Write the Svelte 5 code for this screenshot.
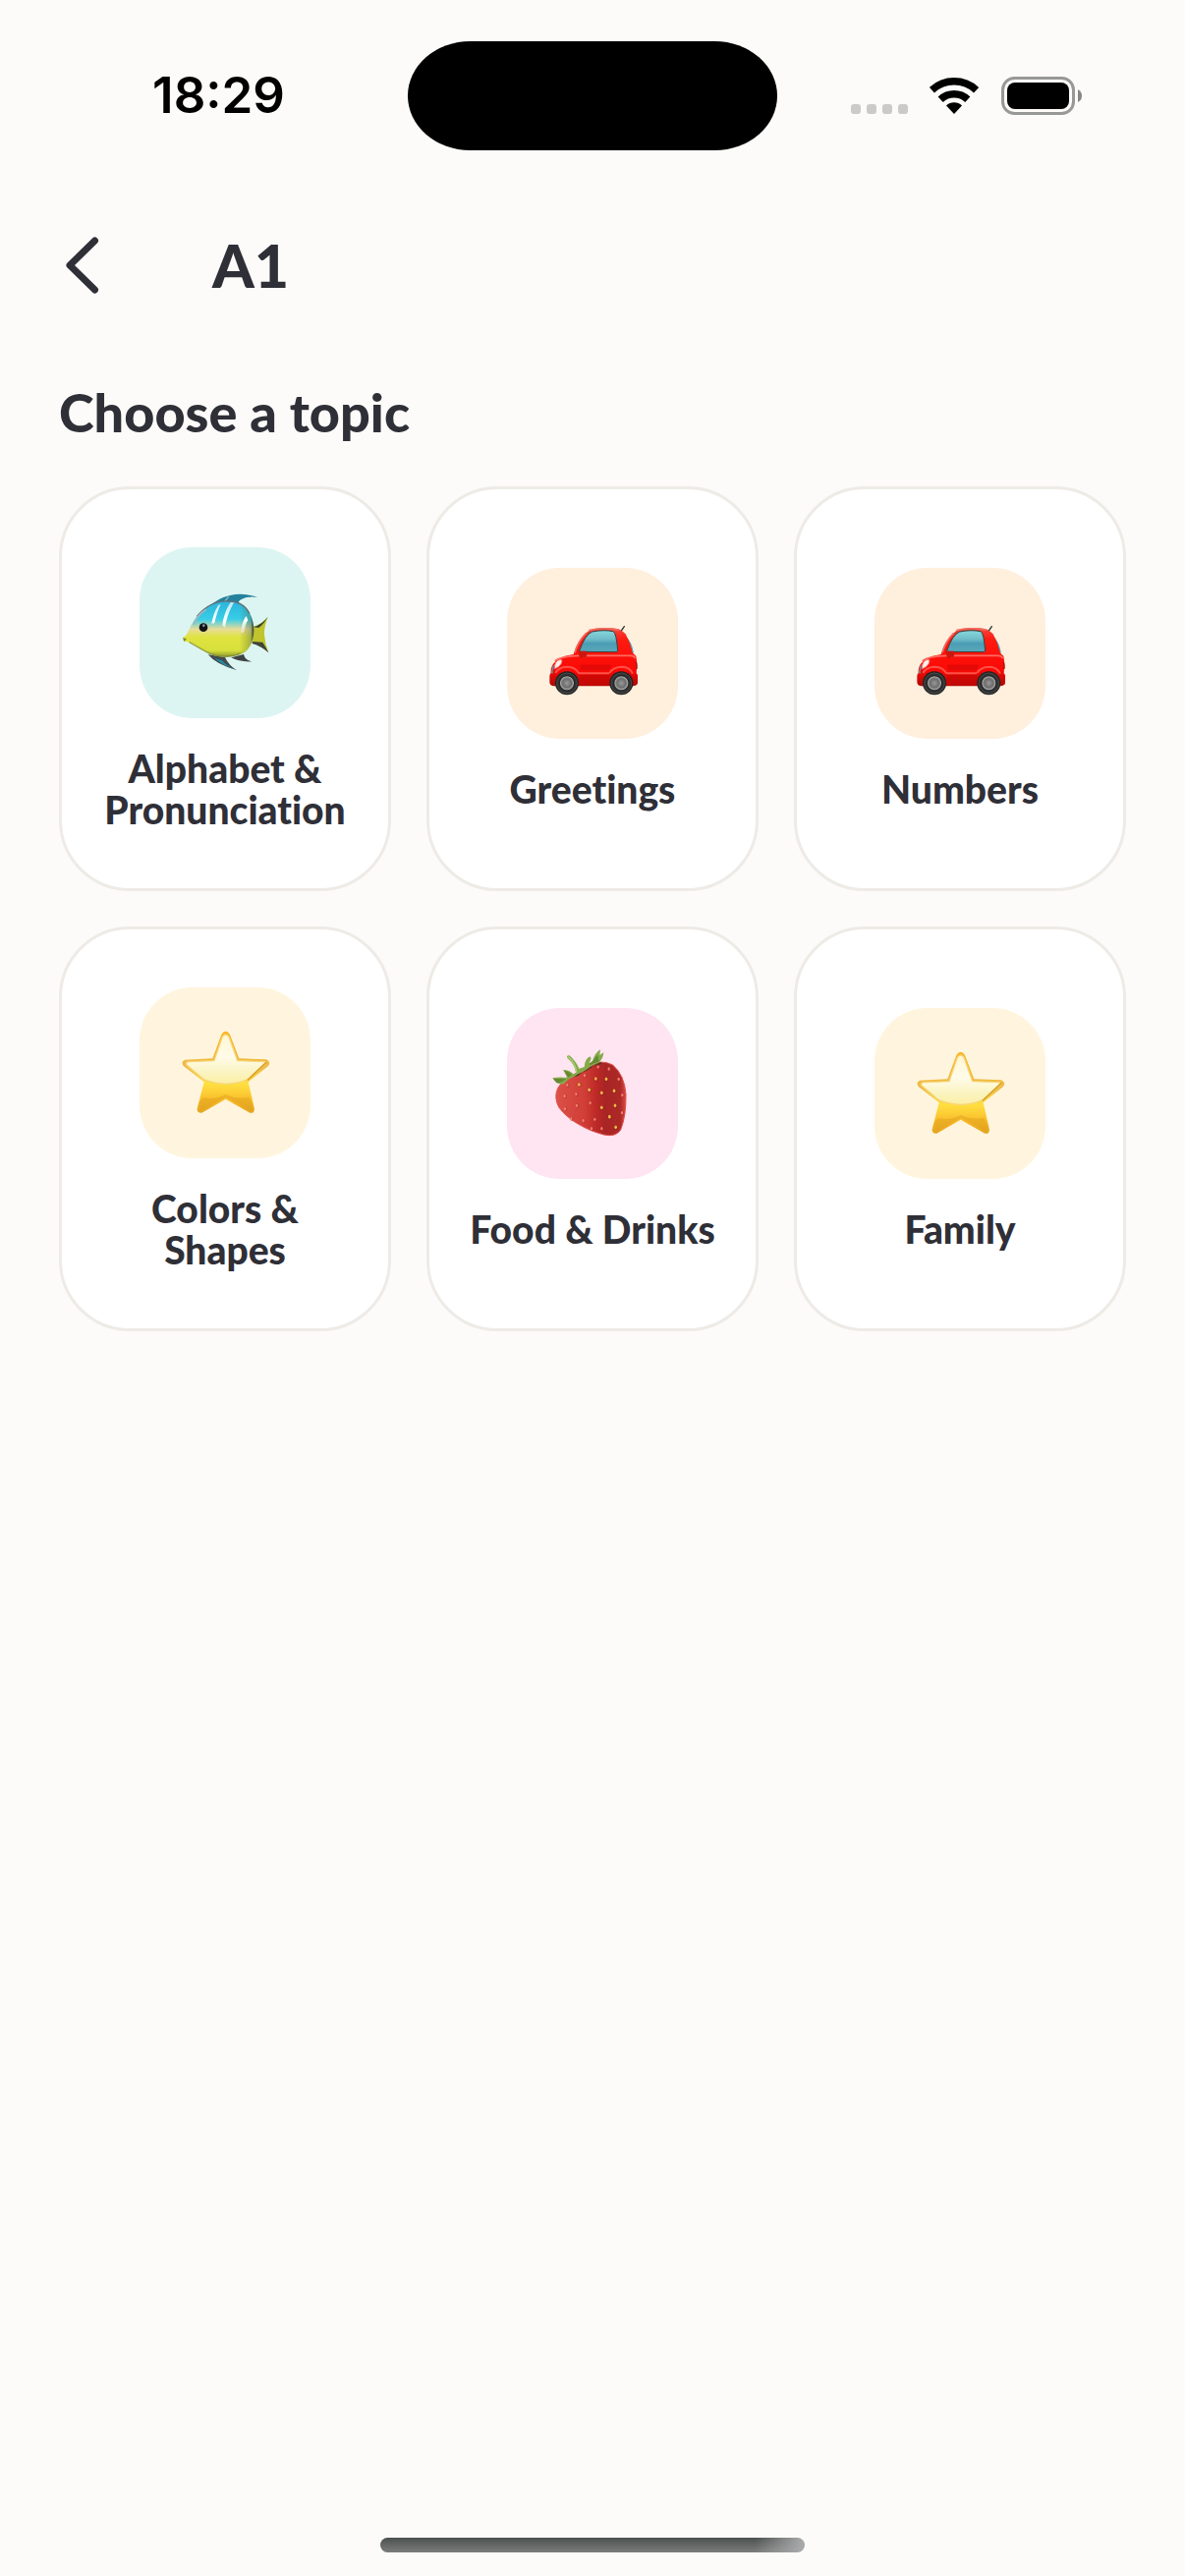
<script lang="ts">
  type Art = 'fish' | 'car' | 'star' | 'strawberry';

  interface Topic {
    name: string;
    art: Art;
  }

  const level = 'A1';

  const topics: Topic[] = [
    { name: 'Alphabet & Pronunciation', art: 'fish' },
    { name: 'Greetings', art: 'car' },
    { name: 'Numbers', art: 'car' },
    { name: 'Colors & Shapes', art: 'star' },
    { name: 'Food & Drinks', art: 'strawberry' },
    { name: 'Family', art: 'star' },
  ];

  // x, y of each seed on the strawberry
  const goldSeeds = [
    [148, 162], [179, 178], [199, 144], [231, 145], [217, 187],
    [255, 181], [217, 232], [258, 226], [241, 260], [260, 292],
  ];
  const pinkSeeds = [
    [112, 163], [104, 197], [139, 191], [141, 226], [105, 236], [182, 218],
    [124, 266], [161, 272], [196, 268], [186, 296], [217, 296], [165, 134],
    [206, 108], [239, 114], [269, 145], [280, 194], [279, 248],
  ];
</script>

{#snippet fish()}
  <svg class="art" viewBox="-54 -69 522 522" aria-hidden="true">
    <defs>
      <linearGradient id="fish-body" x1="0" y1="0" x2="0" y2="1">
        <stop offset="0" stop-color="#2bb4dc" />
        <stop offset="0.32" stop-color="#38cde6" />
        <stop offset="0.5" stop-color="#e8dc9a" />
        <stop offset="0.64" stop-color="#dfe340" />
        <stop offset="0.88" stop-color="#d8e03c" />
        <stop offset="1" stop-color="#8a962c" />
      </linearGradient>
      <linearGradient id="fish-edge" x1="0" y1="0" x2="1" y2="0">
        <stop offset="0.7" stop-color="#4a6038" stop-opacity="0" />
        <stop offset="0.93" stop-color="#4a6038" stop-opacity="0.35" />
        <stop offset="1" stop-color="#222a2c" />
      </linearGradient>
      <linearGradient id="fish-stripe" x1="0" y1="0" x2="0" y2="1">
        <stop offset="0" stop-color="#fff" stop-opacity="0.65" />
        <stop offset="0.6" stop-color="#fff" />
        <stop offset="1" stop-color="#fff" stop-opacity="0.3" />
      </linearGradient>
    </defs>
    <path d="M160 110C185 88 220 73 255 74C277 75 295 79 307 84C285 80 268 83 256 91C248 95 248 100 248 105L205 100Z" fill="#24829d" />
    <path d="M205 98L218 82" stroke="#9bb2bd" stroke-width="4" />
    <path d="M292 174Q321 165 338 143Q326 174 327 197Q329 227 340 253Q321 231 291 225Z" fill="#c1c42c" />
    <path d="M293 175Q321 166 338 143Q326 165 310 177L304 176ZM290 219L322 221Q331 235 340 253Q317 233 290 225Z" fill="#3f4637" />
    <path d="M155 259Q181 290 244 307Q219 293 207 267Z" fill="#434b4b" />
    <path d="M174 269Q198 290 231 302Q209 290 198 277Z" fill="#2489a4" />
    <path d="M226 268Q250 282 289 280Q268 276 264 258Z" fill="#3f4444" />
    <path d="M77 208L88 200C103 174 114 139 151 114C190 88 251 89 275 122C301 153 302 214 276 244C251 269 193 275 150 252C128 241 105 223 90 219L82 220L86 212Z" fill="url(#fish-body)" />
    <path d="M151 114C190 88 251 89 275 122C301 153 302 214 276 244C251 269 193 275 150 252Z" fill="url(#fish-edge)" />
    <path d="M185 109L194 105C186 122 179 145 175 163L166 164C169 147 175 126 185 111ZM225 98L236 98C222 118 212 146 207 176L199 170C201 146 210 119 225 98ZM272 141L277 154C267 169 269 181 263 193L255 192C257 172 263 150 272 141Z" fill="url(#fish-stripe)" />
    <path d="M121 142Q165 92 216 96Q263 96 282 134" fill="none" stroke="#62717a" stroke-width="4" />
    <path d="M112 167Q121 138 150 121" fill="none" stroke="#a2b7c0" stroke-width="5" />
    <path d="M78 208L90 211L82 219Z" fill="#7c872a" />
    <path d="M98 221Q134 242 161 256Q213 274 254 255" fill="none" stroke="#778332" stroke-width="4" opacity="0.65" />
    <circle cx="141" cy="176" r="13" fill="#121416" />
    <circle cx="142" cy="170" r="4" fill="#8794a2" />
  </svg>
{/snippet}

{#snippet car()}
  <svg class="art" viewBox="-72 -111 522 522" aria-hidden="true">
    <defs>
      <linearGradient id="car-body" x1="0" y1="0" x2="0" y2="1">
        <stop offset="0" stop-color="#ee493c" />
        <stop offset="0.2" stop-color="#ff1a10" />
        <stop offset="0.72" stop-color="#fb0a06" />
        <stop offset="1" stop-color="#aa0806" />
      </linearGradient>
      <linearGradient id="car-glass" x1="0" y1="0" x2="0" y2="1">
        <stop offset="0" stop-color="#85d8dc" />
        <stop offset="0.4" stop-color="#70bcc9" />
        <stop offset="0.6" stop-color="#4a9db5" />
        <stop offset="1" stop-color="#5ba8b8" />
      </linearGradient>
      <radialGradient id="car-hub">
        <stop offset="0" stop-color="#999" />
        <stop offset="0.6" stop-color="#6c6c6c" />
        <stop offset="0.85" stop-color="#a3a3a3" />
        <stop offset="1" stop-color="#383838" />
      </radialGradient>
    </defs>
    <path d="M275 84L286 68" stroke="#30383d" stroke-width="4" stroke-linecap="round" />
    <path d="M132 151Q138 119 165 93L174 88L145 148ZM289 96Q310 116 315 149L307 150Z" fill="#48b4c5" />
    <path d="M62 218Q60 194 69 182Q82 161 131 153Q145 117 170 88Q181 75 213 73H249Q274 73 290 91Q305 118 312 149L322 158L325 181L323 211L327 216V241Q326 249 312 250H70Q58 248 58 238V220Q58 211 64 211Z" fill="url(#car-body)" />
    <path d="M148 145Q166 92 188 84Q224 77 252 83Q262 87 266 143L261 146Z" fill="url(#car-glass)" stroke="#37413f" stroke-width="3" />
    <path d="M135 148Q146 111 170 88M178 80Q222 69 270 79" fill="none" stroke="#f56a5e" stroke-width="5" />
    <path d="M74 173Q93 158 150 157H302Q317 156 319 165" fill="none" stroke="#ff6b61" stroke-width="5" />
    <path d="M76 210Q86 191 112 191Q138 192 148 212M241 210Q253 191 279 191Q303 192 312 212M148 211H240" fill="none" stroke="#ff5147" stroke-width="6" />
    <path d="M150 185H246L239 202H154Z" fill="#d80906" opacity="0.7" />
    <path d="M149 216H240L242 248H145Z" fill="#c90806" opacity="0.7" />
    <path d="M147 143H168Q173 143 172 152L170 161H160L158 166H153L148 158Z" fill="#cb1710" />
    <path d="M70 187L65 208L68 211" fill="none" stroke="#559eaa" stroke-width="4" />
    <path d="M73 197Q73 172 91 169Q99 170 93 182Q87 192 76 196Z" fill="#fff0ed" stroke="#ff7a70" stroke-width="3" />
    <path d="M321 178Q325 182 324 198" stroke="#9a1515" stroke-width="4" fill="none" />
    {#each [111, 277] as cx}
      <circle {cx} cy="241" r="36" fill="#232323" />
      <circle {cx} cy="241" r="31" fill="#303332" stroke="#4a4a4a" stroke-width="3" />
      <circle {cx} cy="241" r="23" fill="url(#car-hub)" stroke="#1b1b1b" stroke-width="2" />
    {/each}
  </svg>
{/snippet}

{#snippet star(id: string)}
  <svg class="art" viewBox="-84 -75 522 522" aria-hidden="true">
    <defs>
      <linearGradient id="star-base-{id}" x1="0" y1="0" x2="0" y2="1">
        <stop offset="0" stop-color="#f9b520" />
        <stop offset="0.45" stop-color="#eebb49" />
        <stop offset="0.64" stop-color="#ffe040" />
        <stop offset="0.74" stop-color="#fdd038" />
        <stop offset="0.86" stop-color="#f9b826" />
        <stop offset="1" stop-color="#e2a41f" />
      </linearGradient>
      <linearGradient id="star-shine-{id}" x1="0" y1="0" x2="0" y2="1">
        <stop offset="0" stop-color="#fff6d4" />
        <stop offset="0.45" stop-color="#fffbe9" />
        <stop offset="0.8" stop-color="#faf3bd" />
        <stop offset="1" stop-color="#fcefa4" />
      </linearGradient>
    </defs>
    <path d="M166 69Q179 50 192 69L220 142L303 145Q319 153 309 165L248 214L267 296Q266 311 253 308L179 266L106 308Q91 309 92 295L113 214L50 165Q41 151 55 146L139 142Z" fill="url(#star-base-{id})" />
    <path d="M169 76Q179 62 189 76L215 149L298 152Q306 155 297 163L247 206Q181 234 112 206L61 163Q54 154 66 152L144 149Z" fill="url(#star-shine-{id})" stroke="#f6d578" stroke-width="4" />
    <path d="M302 155L247 207" stroke="#dda025" stroke-width="5" stroke-linecap="round" />
    <path d="M99 276L110 262Q150 268 179 252Q210 268 250 260L262 285L258 303L180 261L102 303Z" fill="#dda11f" opacity="0.5" />
  </svg>
{/snippet}

{#snippet strawberry()}
  <svg class="art" viewBox="-72 -72 522 522" aria-hidden="true">
    <defs>
      <linearGradient id="berry-skin" x1="0" y1="0" x2="1" y2="0">
        <stop offset="0" stop-color="#dc5149" />
        <stop offset="0.42" stop-color="#cf3d36" />
        <stop offset="0.58" stop-color="#bd2927" />
        <stop offset="0.7" stop-color="#a92525" />
        <stop offset="0.92" stop-color="#ad2927" />
        <stop offset="1" stop-color="#dc4b42" />
      </linearGradient>
    </defs>
    <path d="M112 143L178 103Q216 84 251 102Q287 133 291 192Q292 258 275 300Q260 323 224 315C175 303 113 270 87 232C68 197 78 165 112 143Z" fill="url(#berry-skin)" stroke="#dd5149" stroke-width="3" />
    <path d="M106 141L165 123L214 93L217 99L182 109L143 136Z" fill="#374026" />
    <path d="M67 141Q94 138 112 141L99 116Q119 117 131 130L139 127Q137 103 112 80Q109 72 119 73Q139 92 148 113L164 108Q165 84 181 76L185 82L179 97L188 94Q195 65 213 55L211 72L223 64Q222 84 207 95Q184 103 165 119Q143 129 133 137Q112 146 102 159Q81 166 67 141Z" fill="#85aa48" />
    <path d="M69 144Q91 143 108 145Q92 158 80 157ZM180 97Q194 88 204 71L209 92Q188 97 180 103ZM103 120Q116 120 126 132L115 140Z" fill="#557c2b" opacity="0.7" />
    <path d="M116 78Q136 98 140 123" fill="none" stroke="#a4ce75" stroke-width="5" stroke-linecap="round" />
    {#each pinkSeeds as [x, y]}
      <ellipse cx={x + 2} cy={y + 1} rx="5" ry="7" fill="#9e2925" opacity="0.4" />
      <ellipse cx={x} cy={y} rx="3.5" ry="5" fill="#f17c70" />
    {/each}
    {#each goldSeeds as [x, y]}
      <ellipse cx={x + 1} cy={y + 1} rx="6" ry="8" fill="#7f2218" opacity="0.4" />
      <ellipse cx={x} cy={y} rx="4" ry="5.5" fill="#efbb48" />
    {/each}
  </svg>
{/snippet}

<div class="screen">
  <div class="status-bar">
    <span class="time">18:29</span>
    <div class="island"></div>
    <div class="indicators">
      <svg width="58" height="39" viewBox="0 0 58 39" aria-hidden="true">
        {#each [0, 16, 32, 48] as x}
          <rect {x} y="28" width="10" height="10" rx="3" fill="#cacac8" />
        {/each}
      </svg>
      <svg width="51" height="39" viewBox="0 0 51 39" aria-hidden="true">
        <g fill="none" stroke="#000" stroke-width="7.5">
          <path d="M2.4 13.7A33.2 33.2 0 0 1 47.6 13.7" />
          <path d="M11.2 23.2A20.2 20.2 0 0 1 38.8 23.2" />
        </g>
        <path d="M25 38L17 29.4A11.7 11.7 0 0 1 33 29.4Z" />
      </svg>
      <svg width="82" height="39" viewBox="0 0 82 39" aria-hidden="true">
        <rect x="1.5" y="1.5" width="72" height="36" rx="12" fill="none" stroke="#989896" stroke-width="3" />
        <rect x="6" y="6" width="63" height="27" rx="8" />
        <path d="M78 13Q82 15 82 19.5Q82 24 78 26Z" fill="#868684" />
      </svg>
    </div>
  </div>

  <header class="nav">
    <button class="back" aria-label="Back">
      <svg width="48" height="72" viewBox="0 0 48 72" aria-hidden="true">
        <path d="M36.5 11L11 36L36.5 61" />
      </svg>
    </button>
    <h1>{level}</h1>
  </header>

  <main>
    <h2>Choose a topic</h2>
    <div class="topics">
      {#each topics as topic, i}
        <button class="card">
          <span class="tile {topic.art}">
            {#if topic.art === 'fish'}
              {@render fish()}
            {:else if topic.art === 'car'}
              {@render car()}
            {:else if topic.art === 'star'}
              {@render star(`${i}`)}
            {:else}
              {@render strawberry()}
            {/if}
          </span>
          <span class="label">{topic.name}</span>
        </button>
      {/each}
    </div>
  </main>

  <div class="home-indicator"></div>
</div>

<style>
  :global(body) {
    background: #fcfbf9;
  }

  .screen {
    display: flex;
    flex-direction: column;
    box-sizing: border-box;
    min-height: 100vh;
    padding-bottom: 24px;
    background: #fcfbf9;
    color: #2f2f37;
    font-family: Lato, 'Open Sans', sans-serif;
  }

  .status-bar {
    display: grid;
    grid-template-columns: 1fr auto 1fr;
    align-items: center;
    justify-items: center;
    height: 194px;
    padding: 0 30px;
  }

  .time {
    color: #000;
    font-family: Inter, sans-serif;
    font-size: 51px;
    font-weight: 600;
    line-height: 60px;
  }

  .island {
    width: 376px;
    height: 111px;
    border-radius: 64px / 56px;
    background: #000;
  }

  .indicators {
    display: flex;
    gap: 22px;
  }

  .nav {
    display: flex;
    align-items: center;
    gap: 108px;
    height: 152px;
    padding: 0 60px;
  }

  .back {
    display: flex;
    padding: 0;
    border: none;
    background: none;
    cursor: pointer;
  }

  .back path {
    fill: none;
    stroke: #2f2f37;
    stroke-width: 7;
    stroke-linecap: round;
    stroke-linejoin: round;
  }

  h1 {
    margin: 0;
    font-size: 61px;
    font-weight: 900;
    line-height: 76px;
  }

  main {
    padding: 40px 60px;
  }

  h2 {
    margin: 0 0 42px;
    font-size: 54px;
    font-weight: 900;
    line-height: 67px;
  }

  .topics {
    display: grid;
    grid-template-columns: repeat(3, 1fr);
    gap: 36px;
  }

  .card {
    display: flex;
    flex-direction: column;
    align-items: center;
    justify-content: center;
    gap: 30px;
    box-sizing: border-box;
    aspect-ratio: 41 / 50;
    padding: 0 32px;
    border: 3px solid #eeebe7;
    border-radius: 72px;
    background: #fff;
    color: inherit;
    font-family: inherit;
    cursor: pointer;
  }

  .tile {
    display: flex;
    width: 174px;
    height: 174px;
    border-radius: 54px;
    overflow: hidden;
  }

  .tile.fish {
    background: #ddf5f2;
  }

  .tile.car {
    background: #ffefdd;
  }

  .tile.star {
    background: #fff5de;
  }

  .tile.strawberry {
    background: #ffe4f1;
  }

  .art {
    width: 100%;
    height: 100%;
  }

  .label {
    font-size: 39px;
    font-weight: 900;
    font-variant-ligatures: none;
    line-height: 42px;
    text-align: center;
  }

  .home-indicator {
    width: 432px;
    height: 15px;
    margin: auto auto 0;
    border-radius: 8px;
    background:
      linear-gradient(100deg, transparent 88%, #a8a9aa 99%),
      linear-gradient(#4b514e, #7c7c7c);
  }
</style>
